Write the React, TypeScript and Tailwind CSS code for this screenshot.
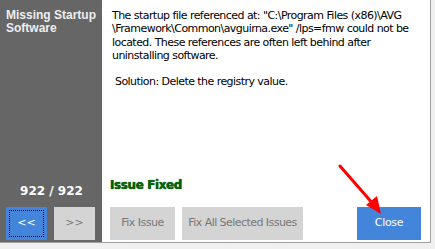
export default function App() {
  const font = { fontFamily: '"DejaVu Sans", Tahoma, sans-serif' };
  return (
    <div className="w-[435px] h-[249px] bg-[#f0f0f0] relative overflow-hidden" style={font}>
      <div className="flex w-[431px] h-[243px] border-r border-b border-[#a0a0a0] bg-white">
        {/* left panel */}
        <div className="w-[102px] h-full bg-[#666666] flex flex-col px-[6px] pt-[9px] pb-[2px]">
          <div className="text-[#eeeeee] font-bold text-[12px] leading-[13px] whitespace-nowrap font-['Liberation_Sans',Arial,sans-serif]">
            Missing Startup
            <br />
            Software
          </div>
          <div className="flex-1" />
          <div className="text-white font-bold text-[12px] leading-[14px] text-center mb-[9px] pl-[1px]">922 / 922</div>
          <div className="flex gap-[7px]">
            <button className="w-[41px] h-[33px] bg-[#4385db] p-[3px]">
              <div className="w-full h-full border border-dotted border-black flex items-center justify-center text-white text-[11px]">
                &lt;&lt;
              </div>
            </button>
            <button className="w-[41px] h-[33px] bg-[#d4d4d4] flex items-center justify-center text-[#7a7a7a] text-[11px]">
              &gt;&gt;
            </button>
          </div>
        </div>
        {/* right panel */}
        <div className="flex-1 flex flex-col pl-[8px] pr-[9px] pt-[9px] pb-[2px]">
          <div className="pl-[2px] text-black text-[11px] leading-[13.3px] tracking-[-0.55px]">
            <p>
              The startup file referenced at: "C:\Program Files (x86)\AVG \Framework\Common\avguirna.exe" /lps=fmw could not be located. These references are often left behind after uninstalling software.
            </p>
            <p className="mt-[13px] pl-[3px]">Solution: Delete the registry value.</p>
          </div>
          <div className="flex-1" />
          <div className="text-[#006400] font-bold text-[12px] leading-[14px] mb-[15px] tracking-[-0.4px] [text-shadow:0_0_1px_#003300]">
            Issue Fixed
          </div>
          <div className="flex items-end">
            <button className="w-[65px] h-[33px] bg-[#d4d4d4] text-[#777777] text-[11px] tracking-[-0.5px] whitespace-nowrap">Fix Issue</button>
            <button className="ml-[7px] w-[121px] h-[33px] bg-[#d4d4d4] text-[#777777] text-[11px] tracking-[-0.55px] whitespace-nowrap">
              Fix All Selected Issues
            </button>
            <div className="flex-1" />
            <button className="w-[64px] h-[33px] bg-[#4385db] text-white text-[11px] tracking-[-0.3px]">Close</button>
          </div>
        </div>
      </div>
      {/* red annotation arrow */}
      <svg className="absolute left-0 top-0" width="435" height="249" viewBox="0 0 435 249">
        <line x1="340" y1="166" x2="374" y2="205" stroke="#ff0000" strokeWidth="3" strokeLinecap="round" />
        <polygon points="381,214 366,205 377,196" fill="#ff0000" />
      </svg>
    </div>
  );
}
